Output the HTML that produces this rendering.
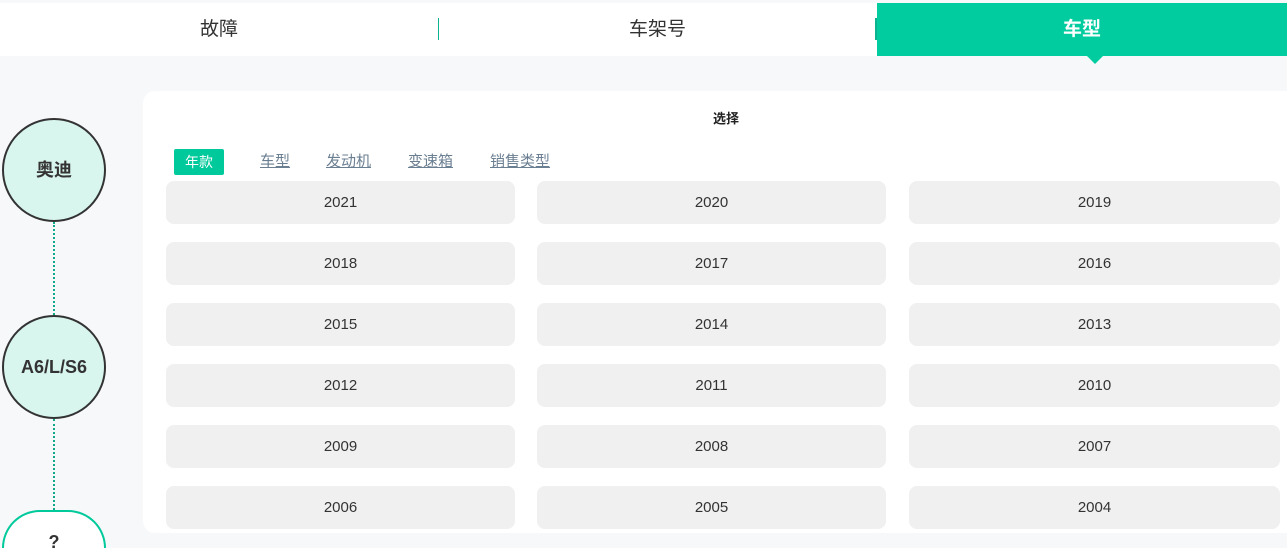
<!DOCTYPE html>
<html style="width:1287px;height:548px;overflow:hidden"><head><meta charset="utf-8"><style>
*{margin:0;padding:0;box-sizing:border-box}
body{width:1287px;height:548px;overflow:hidden;background:#f6f8fa;font-family:"Liberation Sans","Noto Sans CJK SC",sans-serif}
#w{position:relative;width:1287px;height:548px;overflow:hidden}
.top{position:absolute;left:0;top:3px;width:1287px;height:53px;background:#fff}
.t{position:absolute;top:3px;height:53px;line-height:53px;text-align:center;font-size:19px;color:#333}
.sep{position:absolute;top:18px;width:1px;height:22px;background:#0bb48f}
.act{position:absolute;left:877px;top:3px;width:410px;height:53px;background:#00cc9f;color:#fff;font-weight:bold;text-align:center;line-height:53px;font-size:19px}
.tri{position:absolute;left:1087px;top:56px;border-left:8px solid transparent;border-right:8px solid transparent;border-top:8px solid #00cc9f}
.card{position:absolute;left:143px;top:91px;width:1160px;height:442px;background:#fff;border-radius:12px}
.sel{position:absolute;left:713px;top:108px;font-size:13px;font-weight:bold;color:#222}
.badge{position:absolute;left:174px;top:149px;width:50px;height:26px;background:#00c99b;color:#fff;font-size:14px;line-height:26px;text-align:center;border-radius:2px}
.lk{position:absolute;top:150px;font-size:15px;color:#6b7f92;text-decoration:underline}
.b{position:absolute;height:43px;background:#f0f0f0;border-radius:8px;text-align:center;line-height:43px;font-size:15px;color:#333}
.c{position:absolute;left:2px;width:104px;height:104px;border-radius:50%;border:2px solid #333;background:#d8f5ee;text-align:center;line-height:100px;font-weight:bold;font-size:18px;color:#333}
.d{position:absolute;left:53px;width:0;border-left:2px dotted #11a88a}
</style></head><body><div id="w">
<div class="top"></div>
<div class="t" style="left:0;width:438px">故障</div>
<div class="sep" style="left:438px"></div>
<div class="t" style="left:439px;width:437px">车架号</div>
<div class="sep" style="left:875px;width:2px"></div>
<div class="act">车型</div>
<div class="tri"></div>
<div class="d" style="top:222px;height:93px"></div>
<div class="d" style="top:419px;height:91px"></div>
<div class="c" style="top:118px">奥迪</div>
<div class="c" style="top:315px">A6/L/S6</div>
<div class="c" style="top:510px;height:38px;border-radius:52px 52px 0 0;border-bottom:none;border-color:#00c99b;background:#fff;line-height:60px;overflow:hidden">?</div>
<div class="card"></div>
<div class="sel">选择</div>
<div class="badge">年款</div>
<div class="lk" style="left:260px">车型</div>
<div class="lk" style="left:326px">发动机</div>
<div class="lk" style="left:408px">变速箱</div>
<div class="lk" style="left:490px">销售类型</div>
<div class="b" style="left:166px;top:181px;width:349px">2021</div><div class="b" style="left:537px;top:181px;width:349px">2020</div><div class="b" style="left:909px;top:181px;width:371px">2019</div>
<div class="b" style="left:166px;top:242px;width:349px">2018</div><div class="b" style="left:537px;top:242px;width:349px">2017</div><div class="b" style="left:909px;top:242px;width:371px">2016</div>
<div class="b" style="left:166px;top:303px;width:349px">2015</div><div class="b" style="left:537px;top:303px;width:349px">2014</div><div class="b" style="left:909px;top:303px;width:371px">2013</div>
<div class="b" style="left:166px;top:364px;width:349px">2012</div><div class="b" style="left:537px;top:364px;width:349px">2011</div><div class="b" style="left:909px;top:364px;width:371px">2010</div>
<div class="b" style="left:166px;top:425px;width:349px">2009</div><div class="b" style="left:537px;top:425px;width:349px">2008</div><div class="b" style="left:909px;top:425px;width:371px">2007</div>
<div class="b" style="left:166px;top:486px;width:349px">2006</div><div class="b" style="left:537px;top:486px;width:349px">2005</div><div class="b" style="left:909px;top:486px;width:371px">2004</div>
</div></body></html>
